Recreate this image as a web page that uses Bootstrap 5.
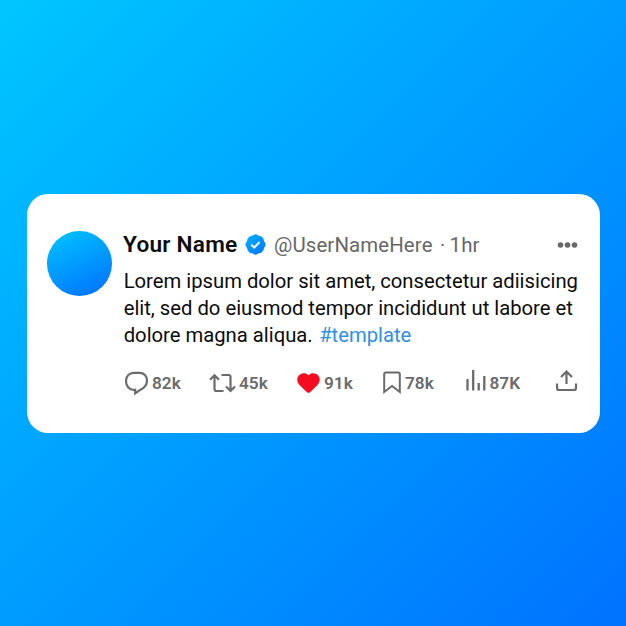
<!DOCTYPE html>
<html lang="en">
<head>
<meta charset="utf-8">
<meta name="viewport" content="width=device-width, initial-scale=1">
<title>Post card</title>
<link href="https://cdn.jsdelivr.net/npm/bootstrap@5.3.0/dist/css/bootstrap.min.css" rel="stylesheet">
<style>
body { font-family: Roboto, "Open Sans", sans-serif; background: linear-gradient(135deg, #00c6ff, #0072ff); color: #0c0c0c; }
svg { display: block; flex: none; overflow: visible; }
.post { width: 573px; height: 239px; border: 0; border-radius: 21px; padding: 37px 22px 0 20.5px; }
.avatar { width: 65px; height: 65px; background: linear-gradient(155deg, #00c2ff 5%, #0072ff 95%); }
.post-main { margin-left: 11px; min-width: 0; }
.post-head { height: 28px; line-height: 28px; white-space: nowrap; }
.name { font-size: 22.6px; font-weight: 600; letter-spacing: .25px; width: 121.5px; }
.handle, .age { font-size: 20.4px; color: #676767; }
.handle { letter-spacing: .12px; width: 174.5px; padding-left: 8.5px; }
.age { word-spacing: -1px; letter-spacing: .1px; }
.post-text { font-size: 20.25px; line-height: 27.4px; white-space: nowrap; margin-top: 9px; padding-left: .7px; letter-spacing: -.01px; }
.tag { color: #2f8fe0; margin-left: 1.5px; }
.stat { color: #6b6b6b; font-size: 17.2px; font-weight: 600; line-height: 24px; }
.post-stats { margin-top: 20px; height: 26px; padding-left: 2px; display: grid; grid-template-columns: 84px 88px 86px 82.5px 90.5px 21px; align-items: center; }
.ink { fill: none; stroke: #6b6b6b; stroke-width: 2; }
.raise { margin-top: -5px; }
</style>
</head>
<body class="vh-100 d-flex align-items-center justify-content-center overflow-hidden">
<article class="card post flex-row align-items-start">
  <div class="avatar rounded-circle flex-shrink-0"></div>
  <div class="post-main flex-grow-1">
    <header class="post-head d-flex align-items-center">
      <span class="name">Your Name</span>
      <svg width="21" height="21" viewBox="0 0 21 21">
        <defs><linearGradient id="seal" x1="0" y1="0" x2="1" y2="1"><stop offset="0" stop-color="#00b4ff"/><stop offset="1" stop-color="#0072ff"/></linearGradient></defs>
        <path fill="url(#seal)" d="M10.500 .3Q12.400 .5 13.600 1.800Q15.800 1.500 17.200 3.300Q19 4.800 18.900 6.900Q20.500 8.400 20.600 10.500Q20.500 12.600 18.900 14.100Q19 16.200 17.200 17.700Q15.800 19.500 13.600 19.200Q12.400 20.500 10.500 20.700Q8.600 20.500 7.400 19.200Q5.200 19.500 3.800 17.700Q2 16.200 2.100 14.100Q.5 12.600 .4 10.500Q.5 8.400 2.100 6.900Q2 4.800 3.800 3.300Q5.200 1.500 7.400 1.800Q8.600 .5 10.500 .3Z"/>
        <path d="M6.300 10.700l2.900 2.800 5.300-5.400" fill="none" stroke="#fff" stroke-width="2"/>
      </svg>
      <span class="handle">@UserNameHere</span>
      <span class="age">· 1hr</span>
      <svg class="ms-auto" width="20" height="6" viewBox="0 0 20 6" fill="#676767"><circle cx="2.500" cy="3" r="2.800"/><circle cx="9.500" cy="3" r="2.800"/><circle cx="16.500" cy="3" r="2.800"/></svg>
    </header>
    <div class="post-text"><div>Lorem ipsum dolor sit amet, consectetur adiisicing</div><div>elit, sed do eiusmod tempor incididunt ut labore et</div><div>dolore magna aliqua. <span class="tag">#template</span></div></div>
    <footer class="post-stats">
      <div class="stat d-flex align-items-center">
        <svg class="ink me-1" width="23" height="23" viewBox="0 0 23 23"><path d="M8.600 1.800H14.600C19 1.800 22 5 22 9.300C22 13.900 19.500 16.900 15.500 18.700L10.200 22.400V18.900H8.600C4.200 18.900 1 14.900 1 10.200C1 5.200 4.200 1.800 8.600 1.800Z" stroke-width="2.200"/></svg>82k</div>
      <div class="stat d-flex align-items-center">
        <svg class="ink" width="30" height="20" viewBox="0 0 30 20"><path d="M1 6.800L5.500 2.200 10 6.800M5.500 2.500V16q0 2 2 2H14.500M12.500 2H19.500q2 0 2 2V17.500M17 13.500L21.500 18 26 13.500" stroke-width="2.200"/></svg>45k</div>
      <div class="stat d-flex align-items-center">
        <svg class="me-1" width="23" height="20" viewBox="0 0 23 20"><path fill="#f40d20" d="M11.500 2.200C14-.6 18.500-.4 21 2.300C23.500 5.200 23.300 9 20.500 12L13 19.200Q11.500 20.500 10 19.200L2.500 12C-.3 9-.5 5.200 2 2.300C4.500-.4 9-.6 11.500 2.200Z"/></svg>91k</div>
      <div class="stat d-flex align-items-center">
        <svg class="ink me-1" width="18" height="23" viewBox="0 0 18 23"><path d="M1.200 21V3q0-1.500 1.500-1.500H15.300q1.500 0 1.500 1.500V21L9 15Z"/></svg>78k</div>
      <div class="stat d-flex align-items-center">
        <svg class="ink raise me-1" width="20" height="21" viewBox="0 0 20 21"><path d="M1.500 9v11.500M7.200 0v20.500M12.700 13v7.500M18.300 6v14.500" stroke-width="2.300"/></svg>87K</div>
      <svg class="ink raise" width="21" height="21" viewBox="0 0 21 21"><path d="M10.500 14V1.800M5 7L10.500 1.500 16 7M1 13.500V18q0 2 2 2H18q2 0 2-2V13.500" stroke-width="2.200"/></svg>
    </footer>
  </div>
</article>
<script src="https://cdn.jsdelivr.net/npm/bootstrap@5.3.0/dist/js/bootstrap.bundle.min.js"></script>
</body>
</html>
